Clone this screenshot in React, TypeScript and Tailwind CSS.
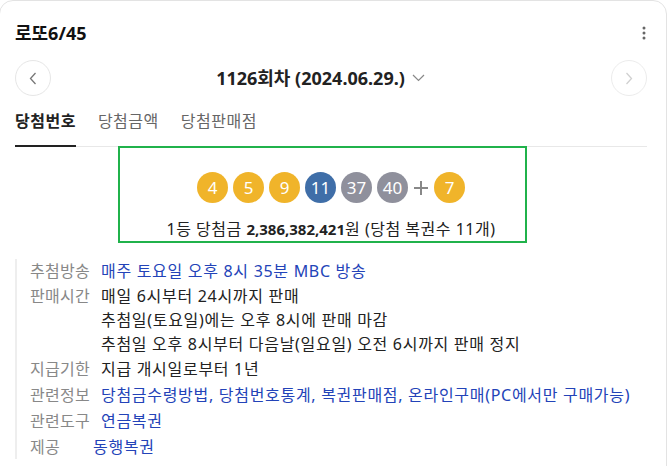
import React from "react";

const Ball = ({ n, color }: { n: number; color: string }) => (
  <div
    className={`w-[31px] h-[31px] rounded-full flex items-center justify-center text-white text-[17px] leading-none ${color}`}
  >
    {n}
  </div>
);

export default function App() {
  const yellow = "bg-[#f0b42a]";
  const blue = "bg-[#3f6ea8]";
  const gray = "bg-[#8f909c]";
  return (
    <div className="w-[668px] h-[466px] overflow-hidden bg-white font-['Noto_Sans','Noto_Sans_CJK_KR',sans-serif]">
      <div className="relative -ml-px w-[668px] h-[500px] rounded-[14px] border border-[#e3e3e3] bg-white pl-[15px] pr-[19px] pt-[20px]">
        {/* header */}
        <div className="flex h-[24px] items-center justify-between">
          <div className="text-[18px] font-bold leading-[24px] text-[#111]">로또6/45</div>
          <svg width="4" height="14" viewBox="0 0 4 14" className="mr-px">
            <circle cx="2" cy="2" r="1.5" fill="#666" />
            <circle cx="2" cy="7" r="1.5" fill="#666" />
            <circle cx="2" cy="12" r="1.5" fill="#666" />
          </svg>
        </div>

        {/* nav */}
        <div className="mt-[15px] flex h-[36px] items-center justify-between">
          <div className="flex h-[36px] w-[36px] items-center justify-center rounded-full border border-[#e6e6e6]">
            <svg width="8" height="13" viewBox="0 0 8 13">
              <path d="M6.5 1 L1.5 6.5 L6.5 12" fill="none" stroke="#777" strokeWidth="1.3" />
            </svg>
          </div>
          <div className="flex items-center gap-[7px] pr-[21px]">
            <span className="text-[18px] font-bold leading-[24px] text-[#222]">1126회차 (2024.06.29.)</span>
            <svg width="13" height="8" viewBox="0 0 13 8">
              <path d="M1 1 L6.5 6.5 L12 1" fill="none" stroke="#888" strokeWidth="1.2" />
            </svg>
          </div>
          <div className="flex h-[36px] w-[36px] items-center justify-center rounded-full border border-[#ececec]">
            <svg width="8" height="13" viewBox="0 0 8 13">
              <path d="M1.5 1 L6.5 6.5 L1.5 12" fill="none" stroke="#d0d0d0" strokeWidth="1.3" />
            </svg>
          </div>
        </div>

        {/* tabs */}
        <div className="flex gap-[22px] border-b border-[#e8e8e8] text-[16px] tracking-[0.5px]">
          <div className="-mb-px border-b-2 border-[#222] pb-[13px] pt-[14px] font-bold leading-[22px] text-[#222]">
            당첨번호
          </div>
          <div className="pb-[14px] pt-[14px] leading-[22px] text-[#666]">당첨금액</div>
          <div className="pb-[14px] pt-[14px] leading-[22px] text-[#666]">당첨판매점</div>
        </div>

        {/* numbers */}
        <div className="relative flex flex-col items-center pb-[19px] pt-[25px]">
          <div className="flex items-center gap-[5px]">
            <Ball n={4} color={yellow} />
            <Ball n={5} color={yellow} />
            <Ball n={9} color={yellow} />
            <Ball n={11} color={blue} />
            <Ball n={37} color={gray} />
            <Ball n={40} color={gray} />
            <svg width="14" height="14" viewBox="0 0 14 14" className="mx-px">
              <path d="M7 0 V14 M0 7 H14" stroke="#888" strokeWidth="2" />
            </svg>
            <Ball n={7} color={yellow} />
          </div>
          <div className="mt-[15px] text-[16px] leading-[22px] tracking-[0.5px] text-[#222]">
            1등 당첨금 <b className="text-[15px] font-bold tracking-normal">2,386,382,421</b>원 (당첨 복권수 11개)
          </div>
          <div className="absolute left-[103px] top-[-1px] h-[97px] w-[409px] border-2 border-[#20b24b]" />
        </div>

        {/* info */}
        <div className="border-l-2 border-[#eeeeee] pl-[13px] text-[16px] leading-[24px] tracking-[0.7px]">
          <div className="flex">
            <span className="w-[71px] shrink-0 tracking-[0.3px] text-[#888]">추첨방송</span>
            <span className="text-[#2343b8]">매주 토요일 오후 8시 35분 MBC 방송</span>
          </div>
          <div className="mt-[1px] flex">
            <span className="w-[71px] shrink-0 tracking-[0.3px] text-[#888]">판매시간</span>
            <div className="text-[#222]">
              <div>매일 6시부터 24시까지 판매</div>
              <div>추첨일(토요일)에는 오후 8시에 판매 마감</div>
              <div>추첨일 오후 8시부터 다음날(일요일) 오전 6시까지 판매 정지</div>
            </div>
          </div>
          <div className="mt-[1px] flex">
            <span className="w-[71px] shrink-0 tracking-[0.3px] text-[#888]">지급기한</span>
            <span className="text-[#222]">지급 개시일로부터 1년</span>
          </div>
          <div className="mt-[2px] flex">
            <span className="w-[71px] shrink-0 tracking-[0.3px] text-[#888]">관련정보</span>
            <span className="text-[#2343b8]">
              당첨금수령방법, 당첨번호통계, 복권판매점, 온라인구매(PC에서만 구매가능)
            </span>
          </div>
          <div className="mt-[2px] flex">
            <span className="w-[71px] shrink-0 tracking-[0.3px] text-[#888]">관련도구</span>
            <span className="text-[#2343b8]">연금복권</span>
          </div>
          <div className="mt-[2px] flex">
            <span className="w-[63px] shrink-0 tracking-[0.3px] text-[#888]">제공</span>
            <span className="text-[#2343b8]">동행복권</span>
          </div>
        </div>
      </div>
    </div>
  );
}
